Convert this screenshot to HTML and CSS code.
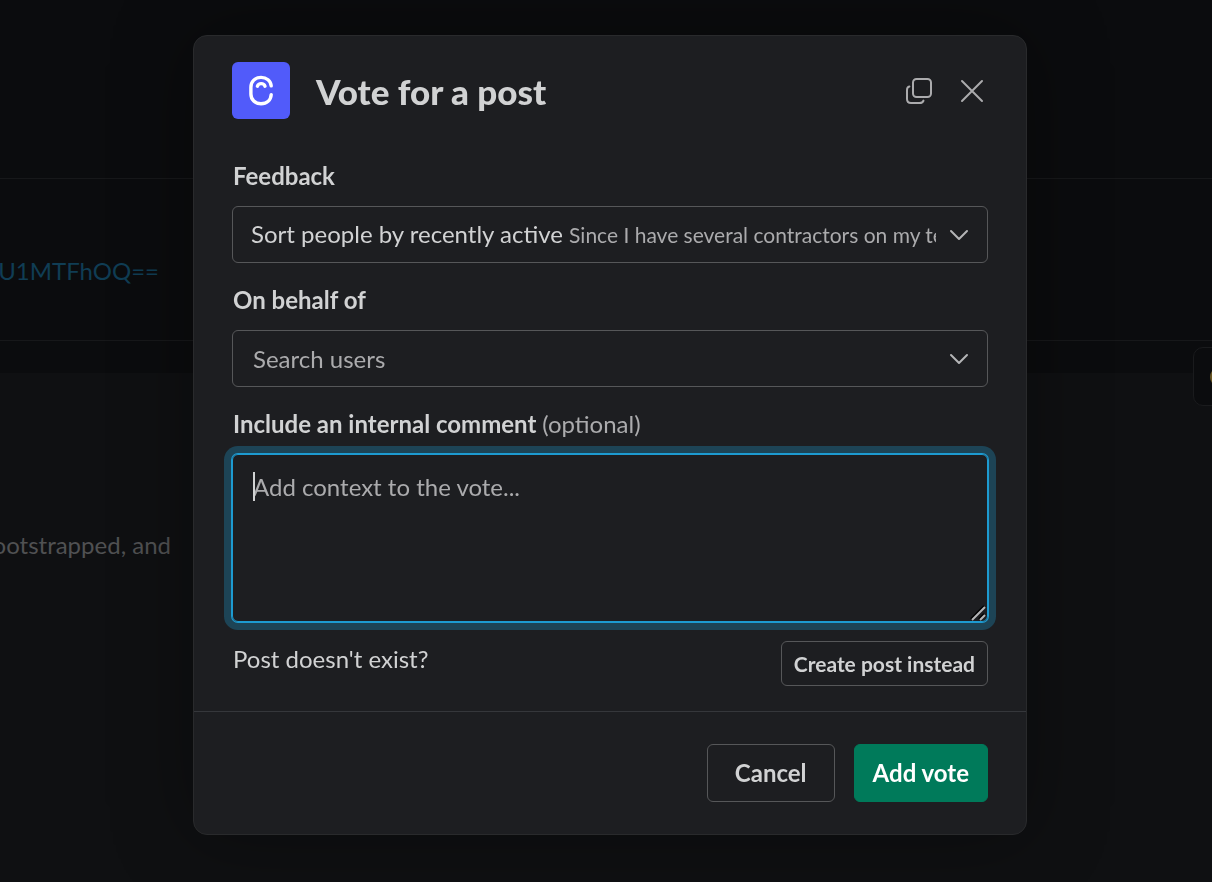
FILE: index.html
```html
<!DOCTYPE html>
<html lang="en">
<head>
<meta charset="utf-8">
<meta name="viewport" content="width=device-width, initial-scale=1">
<title>Vote for a post</title>
<link rel="stylesheet" href="styles.css">
</head>
<body>
<main class="channel">
  <div class="channel-bar"></div>
  <div class="channel-link"><a class="link" href="#">U1MTFhOQ==</a></div>
  <div class="channel-gap"></div>
  <div class="channel-body">
    <p class="excerpt">bootstrapped, and</p>
    <div class="reaction"><span class="reaction-dot"></span></div>
  </div>
</main>

<div class="overlay">
  <form class="modal" role="dialog" aria-labelledby="modal-title">
    <header class="modal-header">
      <svg class="logo" viewBox="0 0 58 58" aria-hidden="true">
        <rect width="58" height="57" rx="6" fill="#515bfa"/>
        <g fill="none" stroke="#fff" stroke-linecap="round">
          <path stroke-width="3.4" d="M39.2 23.8C38.8 18.8 34.6 15.4 29 15.4C23.2 15.4 18.9 19.4 18.9 25.2V32C18.9 37.8 23.2 41.7 29 41.7C34.8 41.7 38.8 38.2 39.2 32.6"/>
          <path stroke-width="3.4" d="M25.4 24.2C26.6 20.8 31.8 20.8 33 24.2"/>
        </g>
      </svg>
      <h1 class="modal-title" id="modal-title">Vote for a post</h1>
      <button class="icon-button" type="button" aria-label="Open in new window">
        <svg class="icon" viewBox="0 0 28 28" aria-hidden="true">
          <rect x="8" y="2" width="18" height="18" rx="3.5"/>
          <path d="M4.400 9.500C2.600 10 2 11.200 2 13V22C2 25 3 26 6 26H14.500C16.800 26 18 25.300 18.500 23.600"/>
        </svg>
      </button>
      <button class="icon-button" type="button" aria-label="Close">
        <svg class="icon" viewBox="0 0 28 28" aria-hidden="true">
          <path d="M4 4L24 24M24 4L4 24"/>
        </svg>
      </button>
    </header>

    <div class="modal-body">
      <div class="field">
        <label class="label" for="feedback">Feedback</label>
        <button class="control picker" id="feedback" type="button" aria-haspopup="listbox">
          <span class="picker-text">Sort people by recently active <span class="picker-note">Since I have several contractors on my team</span></span>
          <svg class="chevron" viewBox="0 0 20 12" aria-hidden="true"><path d="M2 2L10 10L18 2"/></svg>
        </button>
      </div>

      <div class="field">
        <label class="label" for="behalf">On behalf of</label>
        <div class="select-wrap">
          <select class="control select" id="behalf"><option>Search users</option></select>
          <svg class="chevron select-chevron" viewBox="0 0 20 12" aria-hidden="true"><path d="M2 2L10 10L18 2"/></svg>
        </div>
      </div>

      <div class="field">
        <label class="label" for="comment">Include an internal comment <span class="optional">(optional)</span></label>
        <div class="comment-wrap">
          <textarea class="comment" id="comment" placeholder="Add context to the vote..."></textarea>
          <span class="caret"></span>
          <svg class="grip" viewBox="0 0 16 16" aria-hidden="true">
            <path class="grip-shade" d="M1 14L14 1M9 14L14 9"/>
            <path class="grip-line" d="M2 15L15 2M10 15L15 10"/>
          </svg>
        </div>
      </div>

      <div class="create-row">
        <p class="create-text">Post doesn't exist?</p>
        <button class="button button-small" type="button">Create post instead</button>
      </div>
    </div>

    <footer class="modal-footer">
      <button class="button button-cancel" type="button">Cancel</button>
      <button class="button button-primary" type="submit">Add vote</button>
    </footer>
  </form>
</div>
</body>
</html>
```

FILE: styles.css
```css
* {
  box-sizing: border-box;
}

body {
  margin: 0;
  background: #0b0c0e;
  color: #d1d2d3;
  font-family: Lato, "Liberation Sans", sans-serif;
  font-size: 24px;
  line-height: 36px;
}

h1,
p {
  margin: 0;
}

button,
select,
textarea {
  margin: 0;
  font: inherit;
  color: inherit;
}

/* Dimmed channel behind the dialog */
.channel {
  display: flex;
  flex-direction: column;
  min-height: 100vh;
  overflow: hidden;
}

.channel-bar {
  height: 179px;
  border-bottom: 1px solid #17181a;
}

.channel-link {
  display: flex;
  align-items: center;
  justify-content: flex-end;
  width: 100%;
  height: 162px;
  padding: 22px calc(100% - 159px) 0 0;
  border-bottom: 1px solid #17181a;
}

.link {
  color: #103d54;
  text-decoration: none;
}

.channel-gap {
  height: 32px;
}

.channel-body {
  position: relative;
  flex: 1;
  padding-top: 154px;
  background: #0f1012;
}

.excerpt {
  display: flex;
  justify-content: flex-end;
  width: 171px;
  white-space: nowrap;
  color: #505152;
}

.reaction {
  position: absolute;
  top: -26px;
  right: -40px;
  display: flex;
  align-items: center;
  width: 59px;
  height: 59px;
  padding-left: 16px;
  border: 1px solid #1a1b1d;
  border-radius: 10px;
  background: #0b0c0e;
}

.reaction-dot {
  width: 20px;
  height: 20px;
  border-radius: 50%;
  background: #685524;
}

/* Dialog */
.overlay {
  position: fixed;
  inset: 0;
  display: flex;
  align-items: flex-start;
  justify-content: center;
  padding: 35px 0 35px 8px;
  overflow: auto;
}

.modal {
  width: 100%;
  max-width: 834px;
  border: 1px solid #292a2c;
  border-radius: 14px;
  background: #1d1e21;
  box-shadow: 0 0 80px rgba(0, 0, 0, 0.35);
}

.modal-header {
  display: flex;
  align-items: center;
  gap: 25px;
  padding: 26px 40px 0 38px;
}

.logo {
  flex: none;
  width: 58px;
  height: 58px;
}

.modal-title {
  flex: 1;
  padding-left: 1px;
  font-family: "Lato Black", Lato, "Liberation Sans", sans-serif;
  font-size: 35px;
  font-weight: 900;
  line-height: 48px;
}

.icon-button {
  display: flex;
  padding: 0;
  border: 0;
  background: none;
  color: #ababad;
}

.icon {
  width: 28px;
  height: 28px;
  fill: none;
  stroke: currentColor;
  stroke-width: 2;
  stroke-linecap: round;
}

.modal-body {
  display: flex;
  flex-direction: column;
  gap: 19px;
  padding: 38px 38px 25px;
}

.field {
  display: flex;
  flex-direction: column;
  gap: 12px;
}

.label,
.create-text {
  padding-left: 1px;
}

.label {
  font-weight: 700;
}

.optional {
  font-weight: 400;
  color: #ababad;
}

.control {
  width: 100%;
  height: 57px;
  border: 1px solid #565759;
  border-radius: 6px;
  background: transparent;
  text-align: left;
}

.picker {
  display: flex;
  align-items: center;
  gap: 13px;
  padding: 0 18px;
}

.picker-text {
  flex: 1;
  overflow: hidden;
  white-space: nowrap;
}

.picker-note {
  font-size: 21px;
  color: #ababad;
}

.chevron {
  flex: none;
  width: 20px;
  height: 12px;
  fill: none;
  stroke: #b4b5b7;
  stroke-width: 2;
  stroke-linecap: round;
  stroke-linejoin: round;
}

.select-wrap {
  position: relative;
}

.select {
  display: block;
  appearance: none;
  padding: 0 52px 0 20px;
  color: #ababad;
}

.select-chevron {
  position: absolute;
  top: 23px;
  right: 19px;
  pointer-events: none;
}

.comment-wrap {
  position: relative;
}

.comment {
  display: block;
  width: 100%;
  height: 168px;
  padding: 14px 20px;
  border: 1px solid #1d9bd1;
  border-radius: 6px;
  outline: none;
  background: transparent;
  box-shadow: 0 0 0 1px #1d9bd1, 0 0 0 8px #1d4456;
  resize: none;
}

.comment::placeholder {
  color: #ababad;
  opacity: 1;
}

.caret {
  position: absolute;
  top: 18px;
  left: 21px;
  width: 2px;
  height: 29px;
  background: #d1d2d3;
}

.grip {
  position: absolute;
  right: 2px;
  bottom: 1px;
  width: 16px;
  height: 16px;
  fill: none;
}

.grip-shade {
  stroke: #000;
  stroke-width: 2;
}

.grip-line {
  stroke: #b4b5b7;
  stroke-width: 2;
}

.create-row {
  display: flex;
  align-items: flex-start;
  justify-content: space-between;
}

.button {
  border: 1px solid #565759;
  border-radius: 6px;
  background: transparent;
  font-weight: 700;
}

.button-small {
  padding: 4px 12px;
  font-size: 21px;
  line-height: 35px;
}

.modal-footer {
  display: flex;
  justify-content: flex-end;
  gap: 19px;
  padding: 32px 38px;
  border-top: 1px solid #35373b;
}

.button-cancel {
  padding: 10px 27px;
}

.button-primary {
  padding: 10px 18px;
  border-color: #007a5a;
  background: #007a5a;
  color: #fff;
}
```
